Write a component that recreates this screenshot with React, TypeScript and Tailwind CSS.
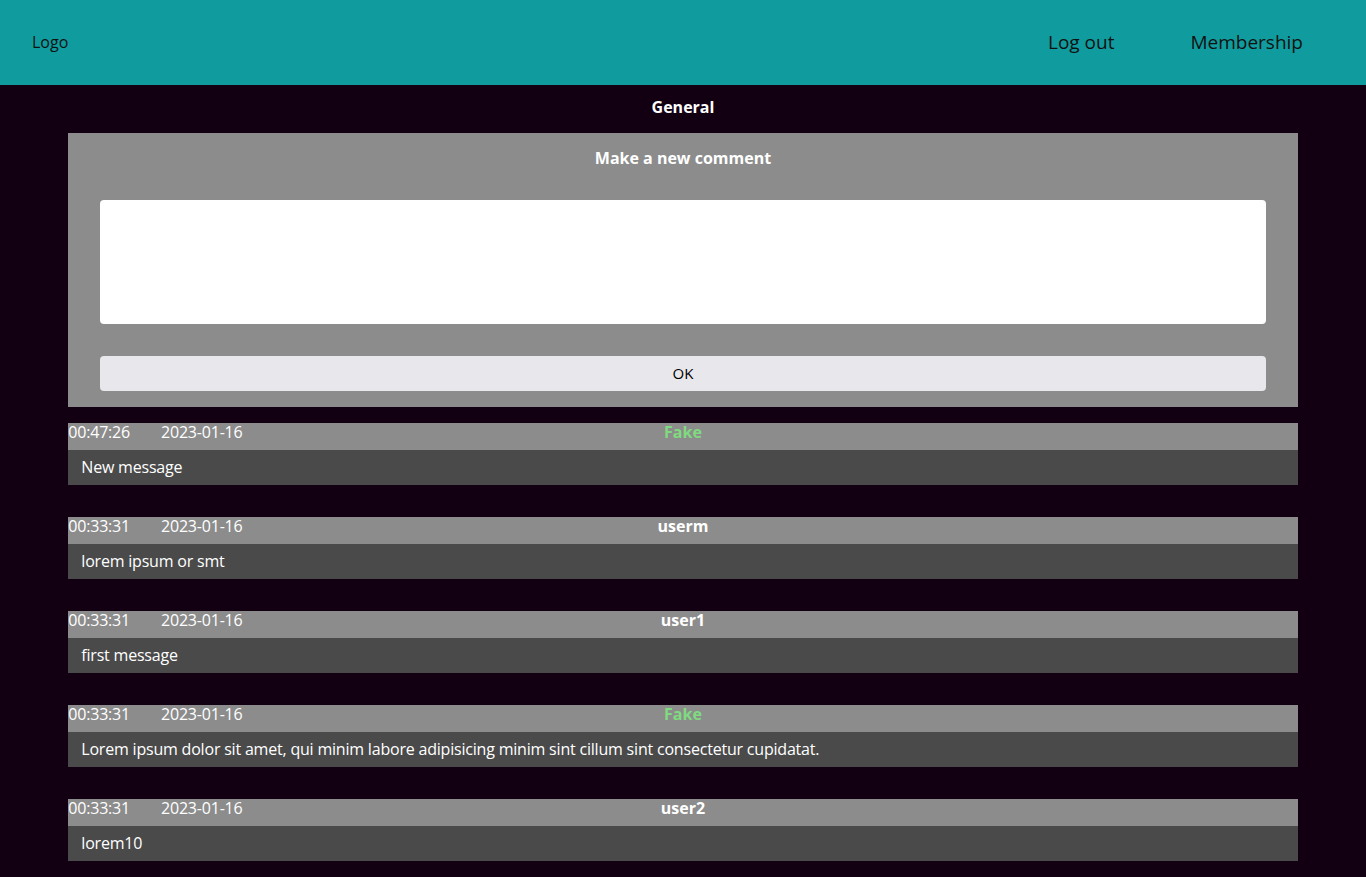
const messages = [
  { time: "00:47:26", date: "2023-01-16", user: "Fake", text: "New message" },
  { time: "00:33:31", date: "2023-01-16", user: "userm", text: "lorem ipsum or smt" },
  { time: "00:33:31", date: "2023-01-16", user: "user1", text: "first message" },
  {
    time: "00:33:31",
    date: "2023-01-16",
    user: "Fake",
    text: "Lorem ipsum dolor sit amet, qui minim labore adipisicing minim sint cillum sint consectetur cupidatat.",
  },
  { time: "00:33:31", date: "2023-01-16", user: "user2", text: "lorem10" },
];

const Message = ({ m }: { m: (typeof messages)[number] }) => {
  return (
    <div>
      {/* Meta row */}
      <div className="grid grid-cols-[1fr_auto_1fr] items-start h-[27px] bg-[#8c8c8c] text-white text-base leading-[19px]">
        <div className="flex gap-[31px] tracking-[-0.2px]">
          <span>{m.time}</span>
          <span>{m.date}</span>
        </div>
        <span className={m.user === "Fake" ? "font-bold text-[#80da80]" : "font-bold text-white"}>
          {m.user}
        </span>
        <div></div>
      </div>
      {/* Body */}
      <div className="h-[35px] flex items-center px-[13px] pb-[2px] bg-[#4a4a4a] text-white text-base tracking-[-0.2px]">
        {m.text}
      </div>
    </div>
  );
};

export default function App() {
  return (
    <div className="min-h-screen bg-[#120012] font-['Open_Sans',sans-serif]">
      {/* Header */}
      <header className="h-[85px] bg-[#109c9e] flex items-center justify-between text-[#111]">
        <div className="pl-8 text-base -mt-[2px]">Logo</div>
        <nav className="flex gap-[76px] pr-[63px] text-[19px]">
          <a>Log out</a>
          <a>Membership</a>
        </nav>
      </header>

      <main className="w-[90%] mx-auto pb-10">
        <h2 className="h-[48px] flex items-center justify-center text-white font-bold text-base pb-1">
          General
        </h2>

        {/* New comment form */}
        <div className="bg-[#8c8c8c] px-8 pt-[13px] pb-4 flex flex-col">
          <h3 className="h-6 text-center text-white font-bold text-base">Make a new comment</h3>
          <textarea className="mt-[30px] h-[124px] bg-white rounded resize-none outline-none p-2"></textarea>
          <button className="mt-8 h-[35px] bg-[#e8e7ec] rounded text-black text-[15px]">OK</button>
        </div>

        {/* Messages */}
        <div className="mt-4 flex flex-col gap-8">
          {messages.map((m, i) => (
            <Message key={i} m={m} />
          ))}
        </div>
      </main>
    </div>
  );
}
